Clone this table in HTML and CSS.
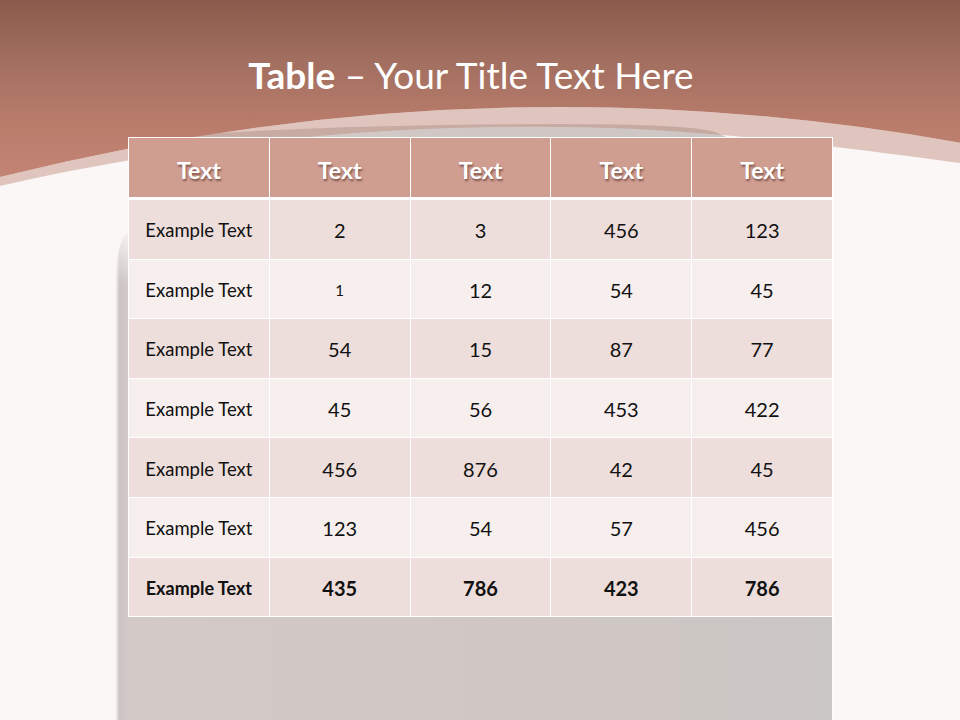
FILE: index.html
```html
<!DOCTYPE html>
<html>
<head>
<meta charset="utf-8">
<link rel="stylesheet" href="styles.css">
</head>
<body>
<div class="slide">
  <svg class="bg" width="960" height="720" viewBox="0 0 960 720">
    <defs>
      <linearGradient id="brown" x1="0" y1="0" x2="0" y2="1" gradientUnits="objectBoundingBox">
        <stop offset="0" stop-color="#8a5b4c"/>
        <stop offset="0.35" stop-color="#a26f60"/>
        <stop offset="0.7" stop-color="#b97c6b"/>
        <stop offset="1" stop-color="#c38474"/>
      </linearGradient>
      <linearGradient id="grey" x1="0" y1="0" x2="1" y2="0">
        <stop offset="0" stop-color="#d3c9c6"/>
        <stop offset="0.6" stop-color="#d0c7c4"/>
        <stop offset="1" stop-color="#cac6c4"/>
      </linearGradient>
      <linearGradient id="edge" x1="0" y1="0" x2="1" y2="0">
        <stop offset="0" stop-color="#f3eeed"/>
        <stop offset="0.3" stop-color="#c9c3c2"/>
        <stop offset="1" stop-color="#d2cac8"/>
      </linearGradient>
      <linearGradient id="edgefade" x1="0" y1="0" x2="0" y2="1">
        <stop offset="0" stop-color="#fbf7f6" stop-opacity="1"/>
        <stop offset="1" stop-color="#fbf7f6" stop-opacity="0"/>
      </linearGradient>
    </defs>
    <rect x="0" y="0" width="960" height="720" fill="#fbf7f6"/>
    <path d="M116,720 L116,270 Q118,240 128,232 L128,720 Z" fill="url(#edge)"/>
    <rect x="112" y="225" width="18" height="60" fill="url(#edgefade)"/>
    <path d="M128,140 Q300,124 560,124 Q690,124 715,132 Q735,140 745,150 L833,150 L833,720 L128,720 Z" fill="url(#grey)"/>
    <rect x="832" y="150" width="2" height="570" fill="#fdfbfb"/>
    <path d="M0,177 Q480,57 960,142.7 L960,163 C860,150 700,127 560,127 C400,124 200,140 0,186 Z" fill="rgb(188,133,116)" fill-opacity="0.43"/>
    <path d="M0,0 H960 V142.7 Q480,57 0,177 Z" fill="url(#brown)"/>
  </svg>

  <h1 class="title"><b>Table</b> – Your Title Text Here</h1>

  <table class="data">
    <thead>
      <tr><th>Text</th><th>Text</th><th>Text</th><th>Text</th><th>Text</th></tr>
    </thead>
    <tbody>
      <tr class="odd"><td class="label">Example Text</td><td>2</td><td>3</td><td>456</td><td>123</td></tr>
      <tr class="even"><td class="label">Example Text</td><td class="small">1</td><td>12</td><td>54</td><td>45</td></tr>
      <tr class="odd"><td class="label">Example Text</td><td>54</td><td>15</td><td>87</td><td>77</td></tr>
      <tr class="even"><td class="label">Example Text</td><td>45</td><td>56</td><td>453</td><td>422</td></tr>
      <tr class="odd"><td class="label">Example Text</td><td>456</td><td>876</td><td>42</td><td>45</td></tr>
      <tr class="even"><td class="label">Example Text</td><td>123</td><td>54</td><td>57</td><td>456</td></tr>
      <tr class="odd total"><td class="label">Example Text</td><td>435</td><td>786</td><td>423</td><td>786</td></tr>
    </tbody>
  </table>
</div>
</body>
</html>
```

FILE: styles.css
```css
html, body {
  margin: 0;
  padding: 0;
}

body {
  font-family: Lato, "Open Sans", sans-serif;
  color: #111;
}

.slide {
  position: relative;
  width: 960px;
  height: 720px;
  overflow: hidden;
  background: #fbf7f6;
}

.bg {
  position: absolute;
  left: 0;
  top: 0;
}

.title {
  position: relative;
  margin: 0;
  padding-top: 54px;
  height: 82px;
  box-sizing: border-box;
  text-align: center;
  font-size: 37px;
  line-height: 42px;
  font-weight: 400;
  color: #ffffff;
  transform: translateX(-9px);
}

.title b {
  font-weight: 700;
}

.data {
  position: relative;
  margin: 55px 0 0 128px;
  width: 705px;
  border-collapse: collapse;
  table-layout: fixed;
}

.data th,
.data td {
  border: 1px solid #ffffff;
  text-align: center;
  padding: 0;
}

.data th {
  height: 55px;
  padding-top: 4px;
  background: #d09d91;
  color: #ffffff;
  font-size: 23px;
  font-weight: 700;
  text-shadow: 1px 2px 2px rgba(60, 30, 20, 0.55);
  border-bottom: 3px solid #ffffff;
}

.data td {
  height: 56.6px;
  padding-top: 2px;
  font-size: 20px;
}

.data td.label {
  font-size: 18.5px;
}

.data td.small {
  font-size: 15px;
}

.data .odd td {
  background: #eddedb;
}

.data .even td {
  background: #f6efed;
}

.data .total td {
  font-weight: 700;
}

.data .total td.label {
  font-size: 18px;
}
```
